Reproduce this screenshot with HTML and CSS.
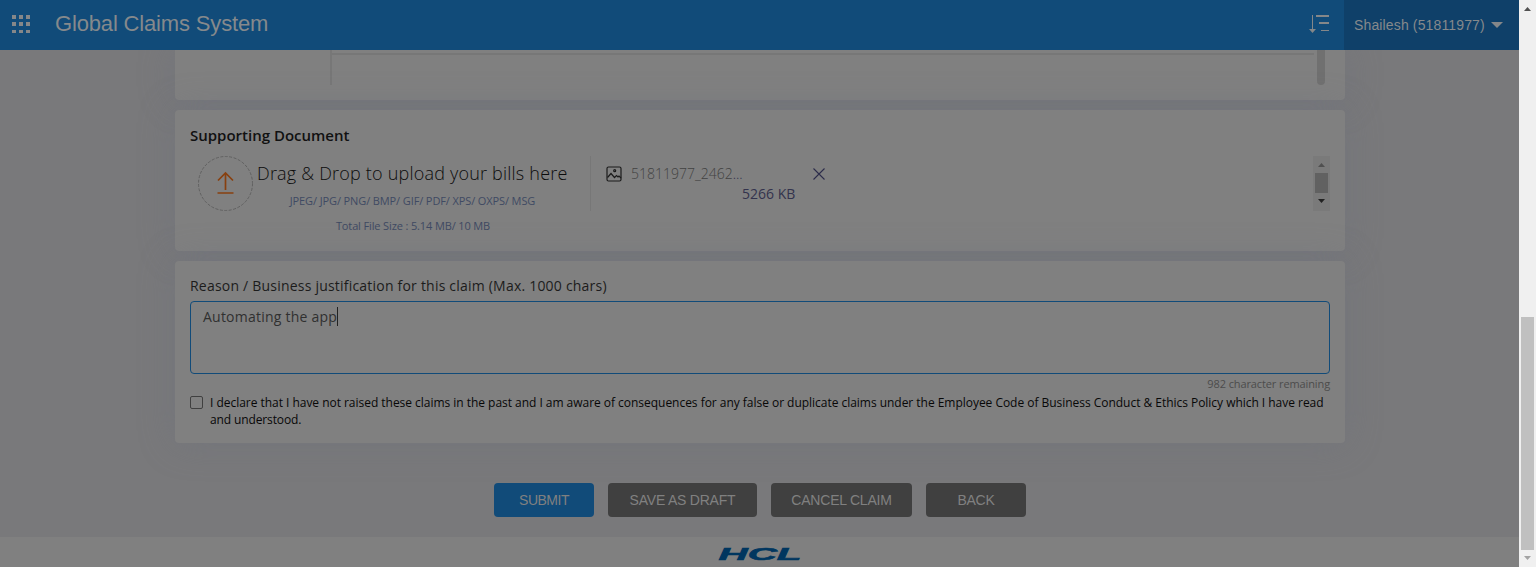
FILE: index.html
```html
<!DOCTYPE html>
<html lang="en">
<head>
<meta charset="utf-8">
<title>Global Claims System</title>
<link rel="stylesheet" href="styles.css">
</head>
<body>
<div class="window">
  <div class="page">
    <header class="header">
      <svg class="apps" width="18" height="18" viewBox="0 0 18 18" shape-rendering="crispEdges"><path d="M0 0h4v4H0zM7 0h4v4H7zM14 0h4v4h-4zM0 7h4v4H0zM7 7h4v4H7zM14 7h4v4h-4zM0 15h4v3H0zM7 15h4v3H7zM14 15h4v3h-4z"/></svg>
      <h1 class="brand"><span>Global Claims System</span></h1>
      <svg class="sort" width="20" height="18" viewBox="0 0 20 18"><path d="M3 0h1v14h3l-3.500 4L0 14h3zM7 0h13v2H7zM10 7h10v2H10zM12 15h8v1h-8z"/></svg>
      <div class="user"><span class="user-name">Shailesh (51811977)</span><svg width="12" height="6" viewBox="0 0 12 6"><path d="M0 0h12L6 6z"/></svg></div>
    </header>
    <main class="content">
      <section class="card card-table">
        <div class="table-side"></div>
        <div class="table-body"><div class="table-line"></div></div>
        <div class="table-scroll"></div>
      </section>
      <section class="card card-docs">
        <h2 class="docs-title"><span>Supporting Document</span></h2>
        <div class="docs-row">
          <svg class="upload" width="56" height="56" viewBox="0 0 56 56"><circle cx="27.500" cy="27.500" r="27" fill="none" stroke="#616161" stroke-dasharray="3 1.500"/><path d="M27.500 17v17M20 24.500l7.500-7.500 7.500 7.500M19.500 37h16" fill="none" stroke="#88400f" stroke-width="1.700"/></svg>
          <div class="drop">
            <p class="drop-title"><span>Drag &amp; Drop to upload your bills here</span></p>
            <p class="drop-types"><span>JPEG/ JPG/ PNG/ BMP/ GIF/ PDF/ XPS/ OXPS/ MSG</span></p>
            <p class="drop-size"><span>Total File Size : 5.14 MB/ 10 MB</span></p>
          </div>
          <div class="files">
            <svg class="picture" width="16" height="16" viewBox="0 0 16 16"><g fill="none" stroke="#1b1b1b" stroke-width="1.200"><rect x="1" y="1" width="14" height="14" rx="1.500"/><path d="M1.500 11.500L5 7.500l3.500 4 2-2 1.500 1.500 1-1 2 2"/><circle cx="8.700" cy="4.700" r="1"/></g></svg>
            <div class="file">
              <p class="file-name"><span>51811977_2462</span><span class="dots">...</span></p>
              <p class="file-size"><span>5266 KB</span></p>
            </div>
            <svg class="remove" width="12" height="12" viewBox="0 0 12 12"><path d="M.5.5l11 11M11.500.5l-11 11" stroke="#2c2c4a" stroke-width="1.100"/></svg>
          </div>
          <div class="mini-bar">
            <svg width="7" height="4" viewBox="0 0 7 4"><path d="M0 4L3.500 0 7 4z" fill="#505050"/></svg>
            <div class="mini-thumb"></div>
            <svg width="7" height="4" viewBox="0 0 7 4"><path d="M0 0h7L3.500 4z" fill="#222"/></svg>
          </div>
        </div>
      </section>
      <section class="card card-reason">
        <p class="label"><span>Reason / Business justification for this claim (Max. 1000 chars)</span></p>
        <div class="textarea"><span>Automating the app</span><i class="caret"></i></div>
        <p class="remaining"><span>982 character remaining</span></p>
        <div class="declare">
          <i class="checkbox"></i>
          <p><span class="declare-one">I declare that I have not raised these claims in the past and I am aware of consequences for any false or duplicate claims under the Employee Code of Business Conduct &amp; Ethics Policy which I have read</span><br><span class="declare-two">and understood.</span></p>
        </div>
      </section>
      <div class="actions">
        <button class="btn btn-submit">SUBMIT</button>
        <button class="btn btn-draft">SAVE AS DRAFT</button>
        <button class="btn btn-cancel">CANCEL CLAIM</button>
        <button class="btn btn-back">BACK</button>
      </div>
    </main>
    <footer class="footer"><svg class="logo-box" width="100" height="28" viewBox="0 0 100 28"><text class="logo" transform="translate(8.500 21) scale(2.100 1)" textLength="39.500" lengthAdjust="spacingAndGlyphs">HCL</text></svg></footer>
  </div>
  <div class="scrollbar">
    <svg width="7" height="4" viewBox="0 0 7 4"><path d="M0 4L3.500 0 7 4z" fill="#505050"/></svg>
    <div class="thumb"></div>
    <svg width="7" height="4" viewBox="0 0 7 4"><path d="M0 0h7L3.500 4z" fill="#a3a3a3"/></svg>
  </div>
</div>
</body>
</html>
```
FILE: styles.css
```css
* { box-sizing: border-box; }
body { margin: 0; overflow: hidden; font-family: "Open Sans", "Noto Sans", sans-serif; }
h1, h2, p { margin: 0; font-weight: 400; white-space: nowrap; }
svg { display: block; flex: none; }

.window { display: flex; width: 1536px; height: 567px; }
.page { width: 1519px; display: flex; flex-direction: column; background: #79797b; }

.header { height: 50px; flex: none; display: flex; background: #114b79; color: #85898c; fill: #858789; font-family: "Liberation Sans", Arial, sans-serif; z-index: 1; }
.apps { margin: 15px 0 0 12px; }
.brand { margin-left: 25px; font-size: 22px; line-height: 48px; letter-spacing: -.16px; }
.sort { margin: 15px 15px 0 auto; }
.user { width: 175px; display: flex; align-items: center; justify-content: space-between; padding: 0 16px 0 10px; background: #0f4069; font-size: 14px; letter-spacing: .14px; }

.content { flex: 1; display: flex; flex-direction: column; align-items: center; gap: 10px; }
.card { width: 1170px; margin-left: 1px; border-radius: 4px; background: #808080; box-shadow: 0 0 35px rgba(108, 112, 124, .45); }
.card-table { height: 50px; display: flex; border-radius: 0 0 4px 4px; padding: 0 20px 15px 155px; }
.table-side { width: 2px; background: #777; }
.table-body { flex: 1; padding: 3px 10px 0 0; margin-right: -2px; }
.table-line { height: 2px; margin-right: -5px; background: #777; }
.table-scroll { width: 8px; border-radius: 0 0 4px 4px; background: #707070; }

.card-docs { height: 141px; padding: 15px; }
.docs-title { font-size: 15px; line-height: 20px; font-weight: 600; color: #111; }
.docs-row { display: flex; margin-top: 11px; }
.upload { margin-left: 8px; }
.drop { width: 337px; height: 55px; padding-left: 3px; border-right: 1px solid #777; }
.drop-title { font-size: 18px; line-height: 34px; font-weight: 300; letter-spacing: .2px; color: #0c0c0c; }
.drop-types, .drop-size { font-size: 11px; line-height: 22px; color: #3f4a63; text-align: center; }
.drop-types { padding-right: 22px; letter-spacing: -.11px; }
.drop-size { padding: 3px 21px 0 0; letter-spacing: -.13px; }
.files { display: flex; padding: 10px 0 0 15px; }
.file { width: 199px; padding-left: 9px; font-size: 14px; line-height: 20px; color: #424242; margin-top: -2px; }
.file-name { font-weight: 300; }
.dots, .file-size { color: #33334d; }
.file-size { font-weight: 400; padding-left: 111px; }
.remove { margin-top: 2px; margin-left: -8px; }
.mini-bar { width: 17px; height: 55px; margin-left: auto; background: #7a7a7a; display: flex; flex-direction: column; align-items: center; padding: 7px 0; gap: 6px; }
.mini-thumb { width: 13px; height: 20px; background: #616161; }

.card-reason { height: 182px; padding: 15px; }
.label { font-size: 14px; line-height: 20px; letter-spacing: .21px; color: #1c1c1c; }
.textarea { height: 73px; margin-top: 5px; padding: 5px 12px; border: 1px solid #114b79; border-radius: 4px; display: flex; font-size: 14px; line-height: 20px; letter-spacing: .23px; color: #303030; }
.caret { width: 1px; height: 19px; background: #222; }
.remaining { font-size: 11px; line-height: 20px; letter-spacing: -.11px; text-align: right; color: #4c4c4c; }
.declare { display: flex; gap: 7px; font-size: 12px; line-height: 17px; letter-spacing: -.03px; color: #080808; }
.declare-two { letter-spacing: -.12px; }
.checkbox { width: 13px; height: 13px; margin-top: 2px; border: 1px solid #404040; border-radius: 2px; }

.actions { display: flex; gap: 14px; margin-top: 30px; margin-left: 1px; }
.btn { height: 34px; padding: 0; border: 0; border-radius: 4px; background: #404040; color: #808080; font: 14px "Liberation Sans", Arial, sans-serif; letter-spacing: -.22px; }
.btn-submit { width: 100px; background: #114b79; letter-spacing: -.5px; }
.btn-draft { width: 149px; }
.btn-cancel { width: 141px; }
.btn-back { width: 100px; }

.footer { height: 30px; flex: none; display: flex; justify-content: center; padding-top: 2px; background: #808080; z-index: 1; }
.logo { font: italic bold 17px "Liberation Sans", Arial, sans-serif; fill: #00365f; stroke: #00365f; stroke-width: .6px; }

.scrollbar { width: 17px; display: flex; flex-direction: column; align-items: center; background: #f0f0f0; padding: 7px 0; }
.thumb { width: 13px; height: 233px; margin: auto 0 6px; background: #c0c0c0; }
```
